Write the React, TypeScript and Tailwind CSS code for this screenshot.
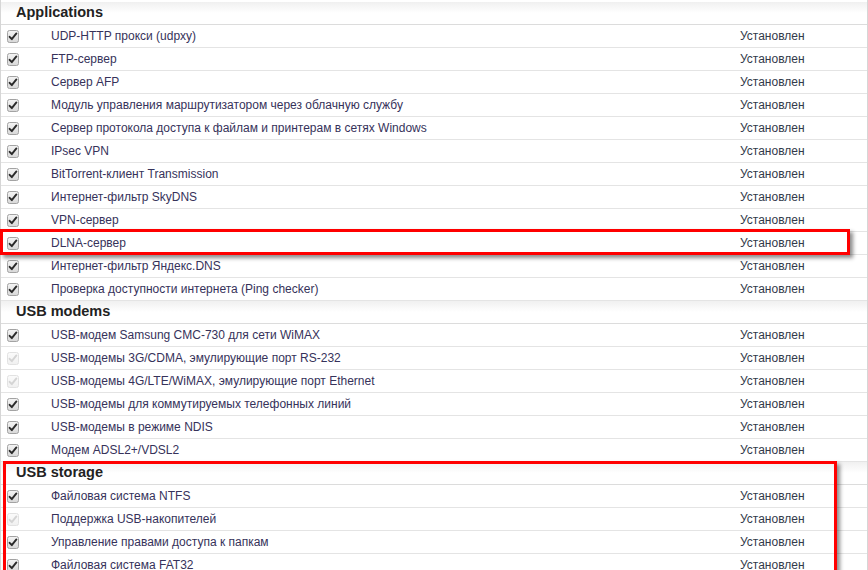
import React from "react";

type Row = { name: string; disabled?: boolean };

const sections: { title: string; rows: Row[] }[] = [
  {
    title: "Applications",
    rows: [
      { name: "UDP-HTTP прокси (udpxy)" },
      { name: "FTP-сервер" },
      { name: "Сервер AFP" },
      { name: "Модуль управления маршрутизатором через облачную службу" },
      { name: "Сервер протокола доступа к файлам и принтерам в сетях Windows" },
      { name: "IPsec VPN" },
      { name: "BitTorrent-клиент Transmission" },
      { name: "Интернет-фильтр SkyDNS" },
      { name: "VPN-сервер" },
      { name: "DLNA-сервер" },
      { name: "Интернет-фильтр Яндекс.DNS" },
      { name: "Проверка доступности интернета (Ping checker)" },
    ],
  },
  {
    title: "USB modems",
    rows: [
      { name: "USB-модем Samsung CMC-730 для сети WiMAX" },
      { name: "USB-модемы 3G/CDMA, эмулирующие порт RS-232", disabled: true },
      { name: "USB-модемы 4G/LTE/WiMAX, эмулирующие порт Ethernet", disabled: true },
      { name: "USB-модемы для коммутируемых телефонных линий" },
      { name: "USB-модемы в режиме NDIS" },
      { name: "Модем ADSL2+/VDSL2" },
    ],
  },
  {
    title: "USB storage",
    rows: [
      { name: "Файловая система NTFS" },
      { name: "Поддержка USB-накопителей", disabled: true },
      { name: "Управление правами доступа к папкам" },
      { name: "Файловая система FAT32" },
    ],
  },
];

function Check({ disabled }: { disabled?: boolean }) {
  return (
    <svg width="12" height="13" viewBox="0 0 12 13" className="shrink-0">
      <defs>
        <linearGradient id={disabled ? "gd" : "ge"} x1="0" y1="0" x2="0" y2="1">
          <stop offset="0" stopColor={disabled ? "#fbfbfb" : "#f4f4f4"} />
          <stop offset="1" stopColor={disabled ? "#f0f0f0" : "#d8d8d8"} />
        </linearGradient>
      </defs>
      <rect
        x="0.5"
        y="0.5"
        width="11"
        height="12"
        rx="2"
        fill={`url(#${disabled ? "gd" : "ge"})`}
        stroke={disabled ? "#e2e2e2" : "#a3a3a3"}
      />
      <path
        d="M2.6 6.8 L4.8 9.2 L9.4 3.4"
        fill="none"
        stroke={disabled ? "#d4d4d4" : "#2a2a2a"}
        strokeWidth="1.9"
        strokeLinecap="round"
        strokeLinejoin="round"
      />
    </svg>
  );
}

export default function App() {
  return (
    <div
      className="relative w-[868px] h-[570px] overflow-hidden bg-white"
      style={{ fontFamily: '"Liberation Sans", Arial, sans-serif' }}
    >
      <div className="border-x border-[#d6d6d6] w-[868px] pt-[2px]">
        {sections.map((s) => (
          <div key={s.title}>
            <div className="h-[23px] flex items-center pl-[15px] border-b border-[#dcdcdc] bg-gradient-to-b from-[#f0f0f0] via-white to-white text-[14.5px] font-bold text-[#222]">
              {s.title}
            </div>
            {s.rows.map((r) => (
              <div
                key={r.name}
                className="h-[23px] flex items-center border-b border-[#e4e4e4] text-[12px]"
              >
                <div className="w-[50px] pl-[6px] flex items-center">
                  <Check disabled={r.disabled} />
                </div>
                <div className="w-[689px] text-[#36325a] whitespace-nowrap">{r.name}</div>
                <div className="text-[#333a4a]">Установлен</div>
              </div>
            ))}
          </div>
        ))}
      </div>

      <div className="absolute left-[0px] top-[229px] w-[850px] h-[26px] border-[3px] border-[#ff0000] shadow-[3px_3px_4px_rgba(0,0,0,0.45)]" />
      <div className="absolute left-[3px] top-[461px] w-[834px] h-[130px] border-[3px] border-[#ff0000] shadow-[3px_3px_4px_rgba(0,0,0,0.45)]" />
    </div>
  );
}
